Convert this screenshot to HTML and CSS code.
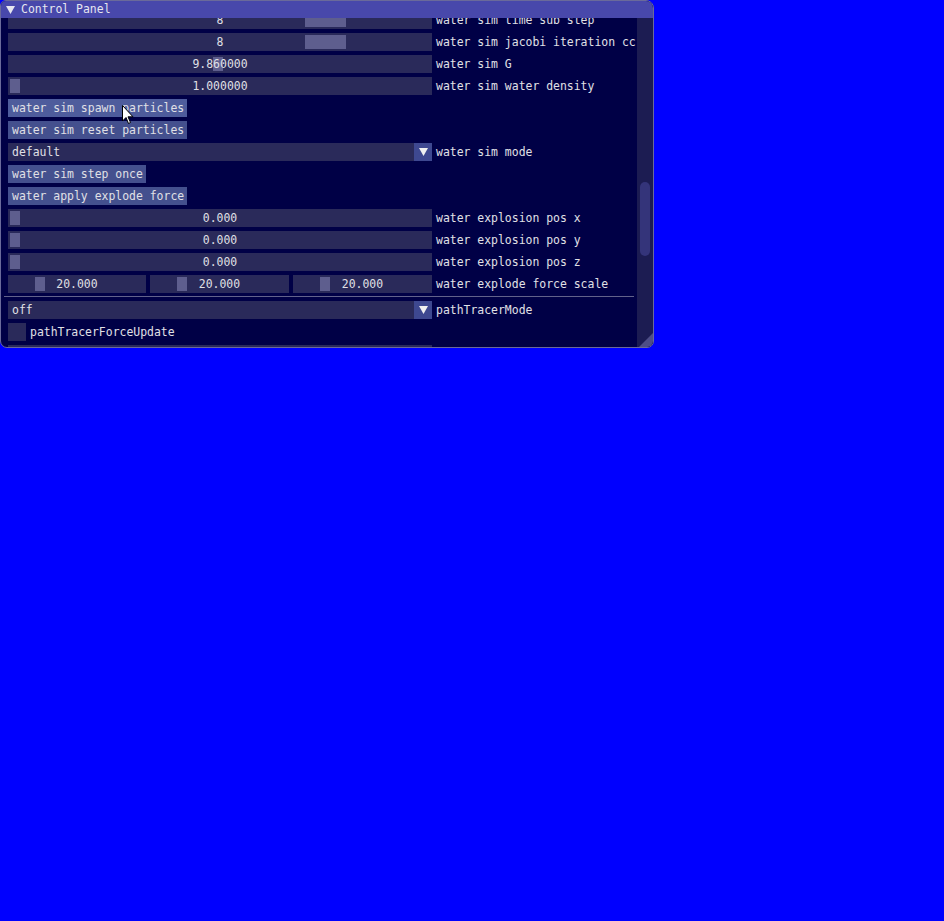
FILE: index.html
```html
<!DOCTYPE html>
<html>
<head>
<meta charset="utf-8">
<link rel="stylesheet" href="styles.css">
</head>
<body>
<div class="win">
  <div class="title"><svg class="tri" width="9" height="8" viewBox="0 0 9 8"><polygon points="0,0 9,0 4.5,8" fill="#e6e6f0"/></svg>Control Panel</div>
  <div class="body">
    <div class="content">
      <div class="list">
        <div class="row"><div class="frame"><span class="grab wide" style="left:297px"></span><span class="val">8</span></div><span class="label">water sim time sub step</span></div>
        <div class="row"><div class="frame"><span class="grab wide" style="left:297px"></span><span class="val">8</span></div><span class="label">water sim jacobi iteration cc</span></div>
        <div class="row"><div class="frame"><span class="grab" style="left:205px"></span><span class="val">9.860000</span></div><span class="label">water sim G</span></div>
        <div class="row"><div class="frame"><span class="grab" style="left:2px"></span><span class="val">1.000000</span></div><span class="label">water sim water density</span></div>
        <div class="row"><div class="btn hover">water sim spawn particles</div></div>
        <div class="row"><div class="btn">water sim reset particles</div></div>
        <div class="row"><div class="combo"><span class="ctext">default</span><span class="arrow"><svg width="9" height="8" viewBox="0 0 9 8"><polygon points="0,0 9,0 4.5,8" fill="#f0f0f0"/></svg></span></div><span class="label">water sim mode</span></div>
        <div class="row"><div class="btn">water sim step once</div></div>
        <div class="row"><div class="btn">water apply explode force</div></div>
        <div class="row"><div class="frame"><span class="grab" style="left:2px"></span><span class="val">0.000</span></div><span class="label">water explosion pos x</span></div>
        <div class="row"><div class="frame"><span class="grab" style="left:2px"></span><span class="val">0.000</span></div><span class="label">water explosion pos y</span></div>
        <div class="row"><div class="frame"><span class="grab" style="left:2px"></span><span class="val">0.000</span></div><span class="label">water explosion pos z</span></div>
        <div class="row">
          <div class="triple">
            <div class="frame small"><span class="grab" style="left:27px"></span><span class="val">20.000</span></div>
            <div class="frame small"><span class="grab" style="left:27px"></span><span class="val">20.000</span></div>
            <div class="frame small"><span class="grab" style="left:27px"></span><span class="val">20.000</span></div>
          </div>
          <span class="label">water explode force scale</span>
        </div>
        <div class="sep"></div>
        <div class="row"><div class="combo"><span class="ctext">off</span><span class="arrow"><svg width="9" height="8" viewBox="0 0 9 8"><polygon points="0,0 9,0 4.5,8" fill="#f0f0f0"/></svg></span></div><span class="label">pathTracerMode</span></div>
        <div class="row"><div class="check"></div><span class="clabel">pathTracerForceUpdate</span></div>
        <div class="row"><div class="frame"></div></div>
      </div>
    </div>
    <div class="scroll"><div class="sgrab"></div></div>
  </div>
  <div class="grip"></div>
</div>
<svg class="cursor" width="12" height="20" viewBox="0 0 12 20"><path d="M0.5 0.5 L0.5 16 L4 12.5 L6.5 18.5 L8.5 17.5 L6 11.8 L11 11.8 Z" fill="#fff" stroke="#000" stroke-width="1"/></svg>
</body>
</html>
```
FILE: styles.css
```css
html, body {
  margin: 0;
  padding: 0;
  background: #0000ff;
  width: 944px;
  height: 921px;
  overflow: hidden;
}
body {
  font-family: "DejaVu Sans Mono", "Liberation Mono", monospace;
  font-size: 11.45px;
  color: #e0e0e6;
}
.win {
  position: relative;
  width: 652px;
  height: 346px;
  background: #000046;
  border: 1px solid #6a6a9a;
  border-radius: 6px 8px 7px 7px;
  overflow: hidden;
  display: flex;
  flex-direction: column;
}
.title {
  height: 17px;
  flex: none;
  background: #4848ab;
  display: flex;
  align-items: center;
  line-height: 17px;
  color: #e6e6f0;
  z-index: 2;
}
.tri {
  margin-left: 5px;
  margin-right: 6px;
  flex: none;
}
.body {
  flex: 1;
  display: flex;
  min-height: 0;
}
.content {
  flex: 1;
  overflow: hidden;
  position: relative;
}
.list {
  margin-top: -7px;
  padding-left: 7px;
  display: flex;
  flex-direction: column;
  gap: 4px;
}
.row {
  height: 18px;
  display: flex;
  align-items: center;
  gap: 4px;
  flex: none;
}
.frame {
  position: relative;
  width: 424px;
  height: 18px;
  background: #2a2a5a;
  flex: none;
}
.frame.small {
  width: 139px;
}
.triple {
  display: flex;
  gap: 4px;
  width: 424px;
}
.triple .frame.small:first-child { width: 138px; }
.grab {
  position: absolute;
  top: 2px;
  width: 10px;
  height: 14px;
  background: #5e5e8e;
}
.grab.wide {
  width: 41px;
}
.val {
  position: absolute;
  inset: 0;
  text-align: center;
  line-height: 18px;
}
.label, .clabel {
  white-space: nowrap;
  line-height: 18px;
}
.btn {
  height: 18px;
  line-height: 18px;
  padding: 0 3px 0 4px;
  background: #44508e;
  white-space: nowrap;
}
.btn.hover {
  background: #4e5c9c;
}
.combo {
  width: 424px;
  height: 18px;
  display: flex;
  background: #2a2a5a;
  flex: none;
}
.ctext {
  flex: 1;
  padding-left: 4px;
  line-height: 18px;
}
.arrow {
  width: 18px;
  background: #3e4890;
  display: flex;
  align-items: center;
  justify-content: center;
}
.sep {
  height: 1px;
  margin-left: -4px;
  margin-top: -1px;
  width: 630px;
  background: #62628a;
  flex: none;
}
.check {
  width: 18px;
  height: 18px;
  background: #2a2a5a;
  flex: none;
}
.scroll {
  width: 16px;
  flex: none;
  background: #1c1c52;
  position: relative;
}
.sgrab {
  position: absolute;
  left: 3px;
  width: 10px;
  top: 164px;
  height: 74px;
  border-radius: 5px;
  background: #34347a;
}
.grip {
  position: absolute;
  right: 0;
  bottom: 0;
  width: 0;
  height: 0;
  border-style: solid;
  border-width: 0 0 14px 14px;
  border-color: transparent transparent #4e4e86 transparent;
}
.cursor {
  position: absolute;
  left: 122px;
  top: 105px;
}
```
